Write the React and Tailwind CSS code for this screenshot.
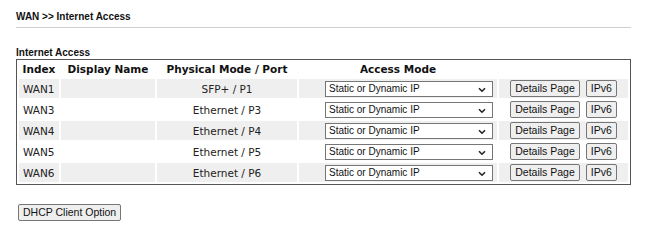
import React from "react";

const rows = [
  { idx: "WAN1", port: "SFP+ / P1", gray: true },
  { idx: "WAN3", port: "Ethernet / P3", gray: false },
  { idx: "WAN4", port: "Ethernet / P4", gray: true },
  { idx: "WAN5", port: "Ethernet / P5", gray: false },
  { idx: "WAN6", port: "Ethernet / P6", gray: true },
];

function Chevron() {
  return (
    <svg width="8" height="6" viewBox="0 0 8 6" className="absolute right-[6px] top-[5px]">
      <path d="M1 1.2 L4 4.2 L7 1.2" fill="none" stroke="#222" strokeWidth="1.6" />
    </svg>
  );
}

function Btn({ children, className = "" }) {
  return (
    <button
      className={
        "h-[17px] whitespace-nowrap border border-[#767676] rounded-[2px] bg-[#efefef] text-[10.5px] leading-[15px] text-[#111] px-[4px] " +
        className
      }
      style={{ fontFamily: '"Liberation Sans", Arial, sans-serif' }}
    >
      {children}
    </button>
  );
}

export default function App() {
  const verd = { fontFamily: '"DejaVu Sans", Verdana, sans-serif' };
  return (
    <div className="w-[662px] h-[225px] bg-white pl-[16px] pt-[10px]">
      <div
        className="text-[10px] font-bold text-[#111] leading-[14px]"
        style={{ fontFamily: '"Liberation Sans", Arial, sans-serif' }}
      >
        WAN &gt;&gt; Internet Access
      </div>
      <div className="w-[615px] h-px bg-[#cfcfcf] mt-[3px]" />
      <div
        className="text-[10px] font-bold text-[#111] leading-[12px] mt-[19px]"
        style={{ fontFamily: '"Liberation Sans", Arial, sans-serif' }}
      >
        Internet Access
      </div>
      <table
        className="w-[615px] border-separate border-spacing-[2px] border border-[#555] mt-[0px] text-[10.5px] text-[#222]"
        style={verd}
      >
        <thead>
          <tr className="h-[15px]">
            <th className="w-[40px] font-bold text-[10.5px] text-[#111] text-center leading-[15px] p-0">Index</th>
            <th className="w-[94px] font-bold text-[10.5px] text-[#111] text-center leading-[15px] p-0">Display Name</th>
            <th className="w-[140px] font-bold text-[10.5px] text-[#111] text-center leading-[15px] p-0">Physical Mode / Port</th>
            <th className="w-[198px] font-bold text-[10.5px] text-[#111] text-center leading-[15px] p-0">Access Mode</th>
            <th className="p-0"></th>
          </tr>
        </thead>
        <tbody>
          {rows.map((r) => {
            const bg = r.gray ? "bg-[#efefef]" : "bg-white";
            return (
              <tr key={r.idx} className="h-[19px]">
                <td className={bg + " pl-[4px] p-0 leading-[16px]"}>{r.idx}</td>
                <td className={bg + " p-0"}></td>
                <td className={bg + " text-center p-0 leading-[16px]"}>{r.port}</td>
                <td className={bg + " p-0 pl-[26px]"}>
                  <div
                    className="relative w-[168px] h-[16px] border border-[#767676] bg-white text-[10px] leading-[14px] pl-[3px] text-[#111]"
                    style={{ fontFamily: '"Liberation Sans", Arial, sans-serif' }}
                  >
                    Static or Dynamic IP
                    <Chevron />
                  </div>
                </td>
                <td className={bg + " p-0"}>
                  <div className="flex justify-center gap-[6px]">
                    <Btn>Details Page</Btn>
                    <Btn className="px-[3px]">IPv6</Btn>
                  </div>
                </td>
              </tr>
            );
          })}
        </tbody>
      </table>
      <div className="mt-[13px] pl-[2px]">
        <Btn className="px-[4px]">DHCP Client Option</Btn>
      </div>
    </div>
  );
}
